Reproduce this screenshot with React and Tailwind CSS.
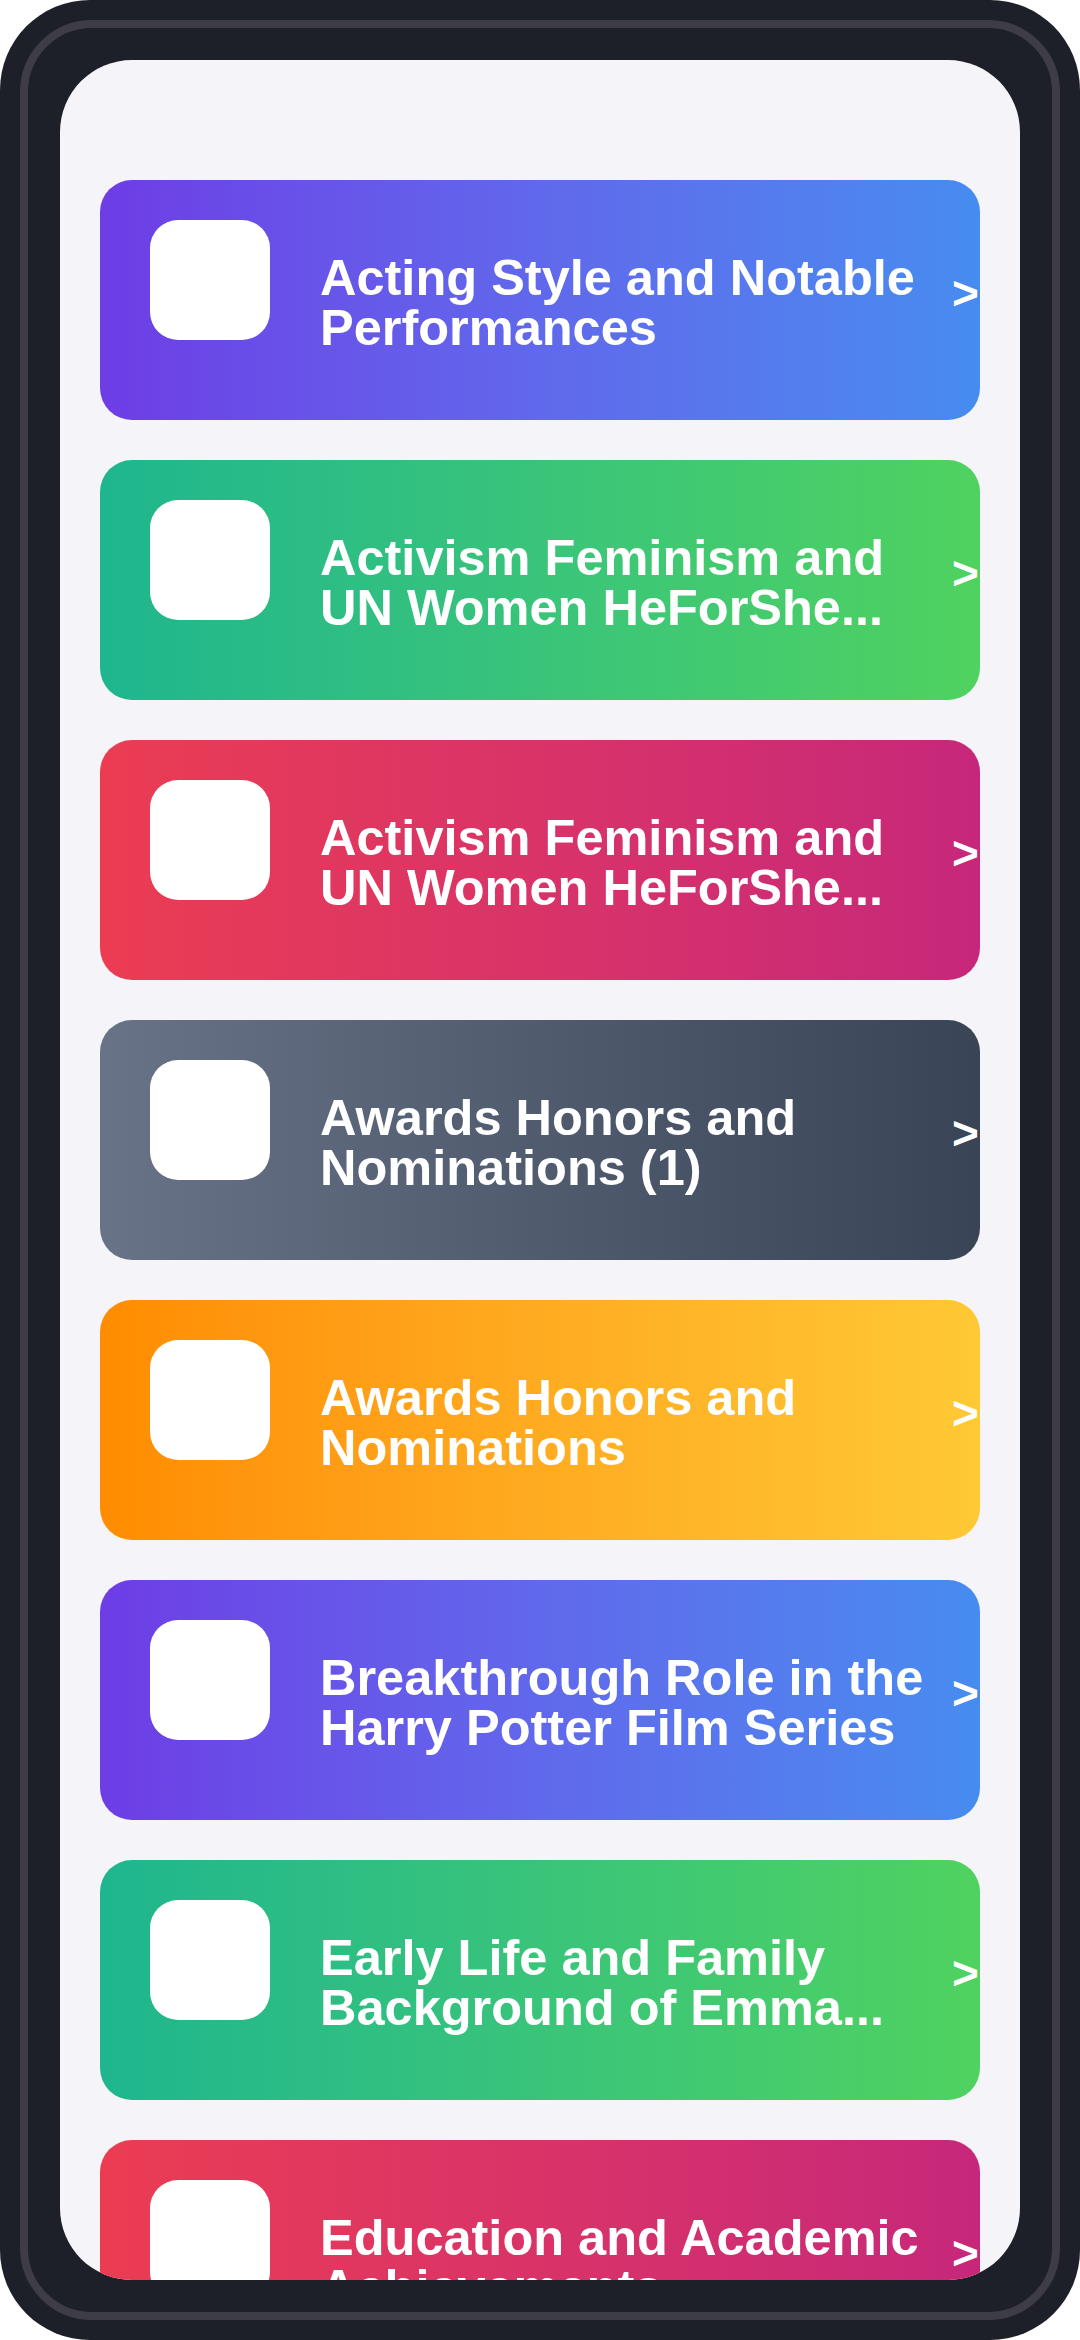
const topics = [
  { title: "Acting Style and Notable Performances", bg: "bg-gradient-to-r from-[#6d3ce6] to-[#468cf0]" },
  { title: "Activism Feminism and UN Women HeForShe...", bg: "bg-gradient-to-r from-[#1eb68e] to-[#4fd25f]" },
  { title: "Activism Feminism and UN Women HeForShe...", bg: "bg-gradient-to-r from-[#eb3c52] to-[#c7277a]" },
  { title: "Awards Honors and Nominations (1)", bg: "bg-gradient-to-r from-[#687387] to-[#3a4457]" },
  { title: "Awards Honors and Nominations", bg: "bg-gradient-to-r from-[#ff8c00] to-[#ffc934]" },
  { title: "Breakthrough Role in the Harry Potter Film Series", bg: "bg-gradient-to-r from-[#6d3ce6] to-[#468cf0]" },
  { title: "Early Life and Family Background of Emma...", bg: "bg-gradient-to-r from-[#1eb68e] to-[#4fd25f]" },
  { title: "Education and Academic Achievements", bg: "bg-gradient-to-r from-[#eb3c52] to-[#c7277a]" },
];

function TopicCard({ title, bg }) {
  return (
    <div className={`${bg} h-[240px] shrink-0 rounded-[32px] flex items-center pl-[50px] overflow-hidden`}>
      {/* kotak ikon, agak naik ke atas */}
      <div className="w-[120px] h-[120px] bg-white rounded-[28px] shrink-0 self-start mt-[40px]" />
      <div className="ml-[50px] w-[620px] pt-[6px] text-white font-bold text-[50.5px] leading-[50px]">
        {title}
      </div>
      <div className="ml-[12px] text-white font-bold text-[46px] leading-none -mt-[14px]">&gt;</div>
    </div>
  );
}

export default function App() {
  return (
    <div className="w-[1080px] h-[2340px] bg-white" style={{ fontFamily: '"Liberation Sans", Arial, sans-serif' }}>
      <div className="w-full h-full bg-[#1e2029] rounded-[90px] p-[20px]">
        <div className="w-full h-full border-[8px] border-[#3d3c47] rounded-[72px] p-[32px]">
          <div className="w-full h-full bg-[#f5f4f9] rounded-[72px] overflow-hidden">
            <div className="flex flex-col gap-[40px] px-[40px] pt-[120px]">
              {topics.map((item, index) => (
                <TopicCard key={index} title={item.title} bg={item.bg} />
              ))}
            </div>
          </div>
        </div>
      </div>
    </div>
  );
}
